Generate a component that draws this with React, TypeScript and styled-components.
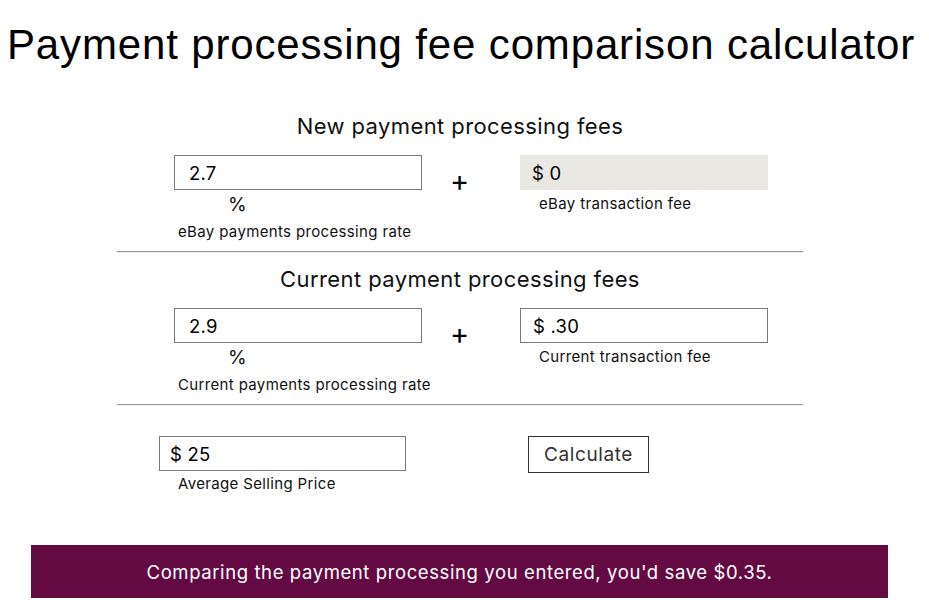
import React from "react";
import styled, { createGlobalStyle } from "styled-components";

const Global = createGlobalStyle`
  html, body { margin: 0; padding: 0; background: #fff; }
  body { font-family: Inter, "Open Sans", sans-serif; color: #111; }
`;

const Page = styled.div`
  width: 929px;
  height: 611px;
  overflow: hidden;
`;

const Title = styled.h1`
  margin: 0;
  padding: 22px 0 0 7px;
  font-family: "Liberation Sans", Arial, sans-serif;
  font-weight: 400;
  font-size: 42px;
  line-height: 46px;
  color: #000;
  letter-spacing: 0.85px;
  white-space: nowrap;
`;

const Calculator = styled.div`
  width: 686px;
  margin: 45px 0 0 117px;
`;

const Section = styled.section`
  display: flex;
  flex-direction: column;
`;

const SectionTitle = styled.h2`
  margin: 0;
  font-size: 22px;
  font-weight: 400;
  line-height: 26px;
  letter-spacing: 0.4px;
  text-align: center;
  color: #111;
`;

const FieldRow = styled.div`
  display: grid;
  grid-template-columns: 248px 98px 248px;
  margin: 16px 0 0 57px;
`;

const Field = styled.div`
  display: flex;
  flex-direction: column;
`;

const Box = styled.div<{ $filled?: boolean; $pad?: number }>`
  box-sizing: border-box;
  height: 35px;
  display: flex;
  align-items: center;
  padding-left: ${(p) => p.$pad ?? 12}px;
  font-size: 18.5px;
  letter-spacing: 0.2px;
  color: #000;
  border: ${(p) => (p.$filled ? "none" : "1px solid #7a7a7a")};
  background: ${(p) => (p.$filled ? "#e9e8e3" : "#fff")};
`;

const Percent = styled.div`
  margin: 7px 0 0 54px;
  font-size: 19px;
  line-height: 16px;
`;

const Label = styled.div<{ $indent?: number }>`
  margin: ${(p) => (p.$indent ? 5 : 10)}px 0 0 ${(p) => p.$indent ?? 4}px;
  font-size: 15px;
  line-height: 18px;
  letter-spacing: 0.35px;
  white-space: nowrap;
  color: #111;
`;

const Plus = styled.div`
  padding: 12px 0 0 28px;
  font-size: 29px;
  line-height: 28px;
  font-weight: 400;
  color: #000;
`;

const Rule = styled.hr`
  margin: 0;
  border: 0;
  border-top: 1px solid #999;
  border-bottom: 1px solid #eee;
`;

const RuleWrap = styled.div`
  padding: 10px 0 13px;
`;

const PriceRow = styled.div`
  display: grid;
  grid-template-columns: 247px 122px 121px;
  margin: 17px 0 0 42px;
  align-items: start;
`;

const PriceLabel = styled(Label)`
  margin: 4px 0 0 19px;
`;

const Spacer = styled.div``;

const CalcButton = styled.button`
  box-sizing: border-box;
  width: 121px;
  height: 37px;
  border: 1px solid #333;
  background: #fff;
  color: #333;
  font-family: inherit;
  font-size: 19px;
  letter-spacing: 0.6px;
  padding: 0;
  cursor: pointer;
`;

const Banner = styled.div`
  margin: 52px 0 0 31px;
  width: 857px;
  height: 53px;
  background: #630a42;
  color: #fff;
  display: flex;
  align-items: center;
  justify-content: center;
  font-size: 18.5px;
  letter-spacing: 0.6px;
  box-sizing: border-box;
`;

export default function App() {
  return (
    <Page>
      <Global />
      <Title>Payment processing fee comparison calculator</Title>
      <Calculator>
        <Section>
          <SectionTitle>New payment processing fees</SectionTitle>
          <FieldRow>
            <Field>
              <Box $pad={14}>2.7</Box>
              <Percent>%</Percent>
              <Label>eBay payments processing rate</Label>
            </Field>
            <Plus>+</Plus>
            <Field>
              <Box $filled>$ 0</Box>
              <Label $indent={19}>eBay transaction fee</Label>
            </Field>
          </FieldRow>
        </Section>
        <RuleWrap>
          <Rule />
        </RuleWrap>
        <Section>
          <SectionTitle>Current payment processing fees</SectionTitle>
          <FieldRow>
            <Field>
              <Box $pad={14}>2.9</Box>
              <Percent>%</Percent>
              <Label>Current payments processing rate</Label>
            </Field>
            <Plus>+</Plus>
            <Field>
              <Box>$ .30</Box>
              <Label $indent={19}>Current transaction fee</Label>
            </Field>
          </FieldRow>
        </Section>
        <RuleWrap>
          <Rule />
        </RuleWrap>
        <PriceRow>
          <Field>
            <Box $pad={10}>$ 25</Box>
            <PriceLabel>Average Selling Price</PriceLabel>
          </Field>
          <Spacer />
          <CalcButton>Calculate</CalcButton>
        </PriceRow>
      </Calculator>
      <Banner>Comparing the payment processing you entered, you'd save $0.35.</Banner>
    </Page>
  );
}
